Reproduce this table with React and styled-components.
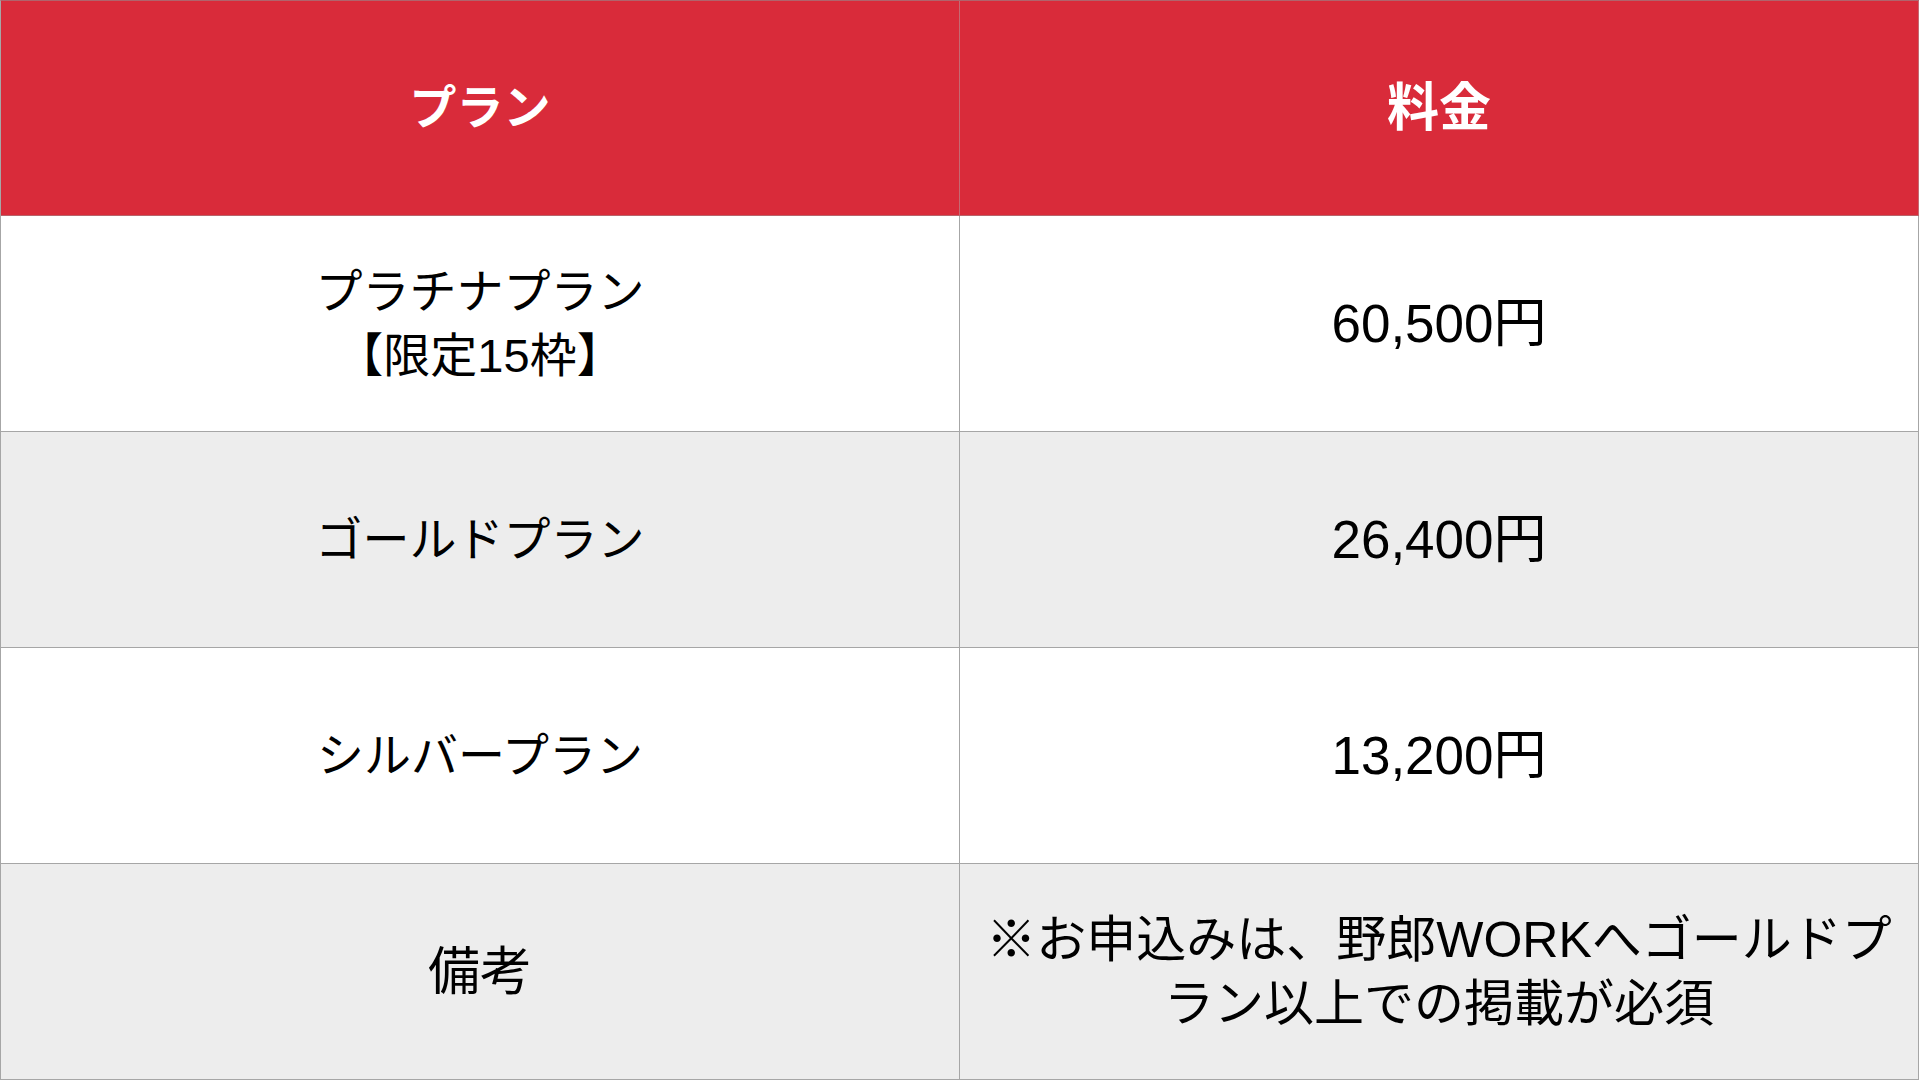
// Pricing table for plan listing
import React from 'react';
import styled, { createGlobalStyle } from 'styled-components';

const GlobalStyle = createGlobalStyle`
  html, body {
    margin: 0;
    padding: 0;
    background: #ffffff;
  }
  *, *::before, *::after {
    box-sizing: border-box;
  }
`;

const Table = styled.div`
  display: grid;
  grid-template-columns: 959px 1fr;
  grid-template-rows: 215px repeat(4, 1fr);
  width: 100%;
  height: 100vh;
  border-top: 1px solid #b0646c;
  border-left: 1px solid #a6a6a6;
  font-family: "Liberation Sans", "Noto Sans CJK JP", sans-serif;
  color: #000000;
`;

const Cell = styled.div`
  display: flex;
  align-items: center;
  justify-content: center;
  text-align: center;
  padding: 0 16px;
  background: ${props => (props.$shaded ? '#ededed' : '#ffffff')};
  border-right: 1px solid #a6a6a6;
  border-bottom: 1px solid #a6a6a6;
  font-size: ${props => props.$size || 48}px;
  line-height: 64px;
  white-space: nowrap;
`;

const HeadCell = styled(Cell)`
  background: #d92b3a;
  color: #ffffff;
  font-weight: bold;
  border-right-color: #c46a72;
  border-bottom-color: #b8636a;
`;

const rows = [
  { plan: ['プラチナプラン', '【限定15枠】'], price: ['60,500円'], planSize: 47, priceSize: 53 },
  { plan: ['ゴールドプラン'], price: ['26,400円'], planSize: 47, priceSize: 53 },
  { plan: ['シルバープラン'], price: ['13,200円'], planSize: 47, priceSize: 53 },
  {
    plan: ['備考'],
    price: ['※お申込みは、野郎WORKへゴールドプ', 'ラン以上での掲載が必須'],
    planSize: 52,
    priceSize: 50,
  },
];

function Lines({ lines }) {
  return lines.map((line, i) => (
    <React.Fragment key={i}>
      {i > 0 && <br />}
      {line}
    </React.Fragment>
  ));
}

export default function App() {
  return (
    <>
      <GlobalStyle />
      <Table>
        <HeadCell $size={47}>プラン</HeadCell>
        <HeadCell $size={52}>料金</HeadCell>
        {rows.map((row, i) => (
          <React.Fragment key={i}>
            <Cell $shaded={i % 2 === 1} $size={row.planSize}>
              <div><Lines lines={row.plan} /></div>
            </Cell>
            <Cell $shaded={i % 2 === 1} $size={row.priceSize}>
              <div><Lines lines={row.price} /></div>
            </Cell>
          </React.Fragment>
        ))}
      </Table>
    </>
  );
}
